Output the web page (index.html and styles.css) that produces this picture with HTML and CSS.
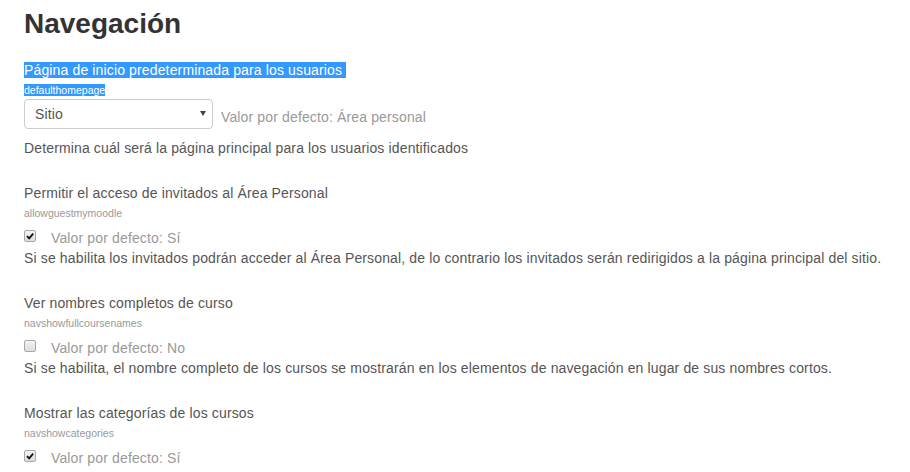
FILE: index.html
```html
<!DOCTYPE html>
<html lang="es">
<head>
<meta charset="utf-8">
<title>Navegación</title>
<link rel="stylesheet" href="styles.css">
</head>
<body>
<main class="page">
  <h2 class="title">Navegación</h2>

  <section class="item">
    <div class="label"><span class="sel">Página de inicio predeterminada para los usuarios&nbsp;</span></div>
    <div class="shortname"><span class="sel">defaulthomepage</span></div>
    <div class="select-row">
      <div class="select-wrap">
        <select class="select">
          <option>Sitio</option>
          <option>Área personal</option>
        </select>
      </div>
      <span class="default default-select">Valor por defecto: Área personal</span>
    </div>
    <div class="desc desc-after-select">Determina cuál será la página principal para los usuarios identificados</div>
  </section>

  <section class="item">
    <div class="label">Permitir el acceso de invitados al Área Personal</div>
    <div class="shortname">allowguestmymoodle</div>
    <div class="check-row">
      <span class="checkbox is-checked"><svg viewBox="0 0 12 12" width="12" height="12"><path d="M2.4 6.2 L5 8.8 L9.8 3.2" fill="none" stroke="#111" stroke-width="2.2"/></svg></span>
      <span class="default">Valor por defecto: Sí</span>
    </div>
    <div class="desc">Si se habilita los invitados podrán acceder al Área Personal, de lo contrario los invitados serán redirigidos a la página principal del sitio.</div>
  </section>

  <section class="item">
    <div class="label">Ver nombres completos de curso</div>
    <div class="shortname">navshowfullcoursenames</div>
    <div class="check-row">
      <span class="checkbox"></span>
      <span class="default">Valor por defecto: No</span>
    </div>
    <div class="desc">Si se habilita, el nombre completo de los cursos se mostrarán en los elementos de navegación en lugar de sus nombres cortos.</div>
  </section>

  <section class="item">
    <div class="label">Mostrar las categorías de los cursos</div>
    <div class="shortname">navshowcategories</div>
    <div class="check-row">
      <span class="checkbox is-checked"><svg viewBox="0 0 12 12" width="12" height="12"><path d="M2.4 6.2 L5 8.8 L9.8 3.2" fill="none" stroke="#111" stroke-width="2.2"/></svg></span>
      <span class="default">Valor por defecto: Sí</span>
    </div>
  </section>
</main>
</body>
</html>
```

FILE: styles.css
```css
html, body {
  margin: 0;
  padding: 0;
  background: #fff;
}

body {
  font-family: "Liberation Sans", Arial, sans-serif;
  font-size: 14px;
  line-height: 20px;
  letter-spacing: 0.14px;
  color: #555;
  overflow: hidden;
}

.page {
  padding: 0 24px;
}

.title {
  font-size: 28px;
  line-height: 31px;
  font-weight: bold;
  letter-spacing: 0;
  color: #333;
  margin: 8px 0 21px;
}

.item {
  margin-bottom: 25px;
}

.label {
  color: #555;
}

.sel {
  background: #3399ff;
  color: #fff;
}

.shortname {
  font-size: 10.5px;
  line-height: 14px;
  letter-spacing: 0;
  color: #999;
  margin-top: 3px;
}

.select-row {
  display: flex;
  align-items: flex-start;
  margin-top: 2px;
}

.select-wrap {
  position: relative;
  width: 189px;
  height: 30px;
}

.select-wrap::after {
  content: "";
  position: absolute;
  right: 7px;
  top: 12px;
  border-left: 3px solid transparent;
  border-right: 3px solid transparent;
  border-top: 5px solid #444;
  pointer-events: none;
}

.select {
  appearance: none;
  -webkit-appearance: none;
  box-sizing: border-box;
  width: 100%;
  height: 30px;
  margin: 0;
  padding: 0 20px 0 10px;
  border: 1px solid #ccc;
  border-radius: 4px;
  background: #fff;
  font-family: "Liberation Sans", Arial, sans-serif;
  font-size: 14px;
  letter-spacing: 0.14px;
  color: #555;
}

.default {
  color: #999;
}

.default-select {
  margin-left: 8px;
  margin-top: 8px;
}

.desc-after-select {
  margin-top: 9px;
}

.check-row {
  display: flex;
  align-items: center;
  margin-top: 8px;
  height: 20px;
}

.checkbox {
  box-sizing: border-box;
  width: 12px;
  height: 12px;
  margin-top: -4px;
  margin-right: 15px;
  border: 1px solid #a9a9a9;
  border-radius: 2px;
  background: linear-gradient(#f4f4f4, #dcdcdc);
  display: flex;
  align-items: center;
  justify-content: center;
}

.checkbox svg {
  display: block;
  width: 10px;
  height: 10px;
}
```
